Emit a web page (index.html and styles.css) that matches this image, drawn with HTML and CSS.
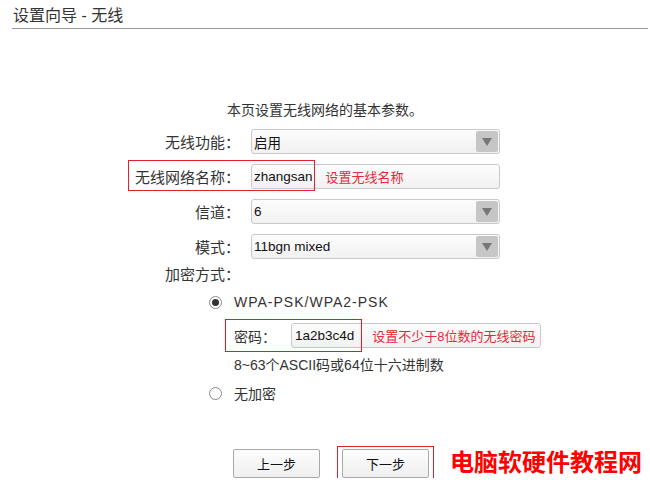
FILE: index.html
```html
<!DOCTYPE html>
<html lang="zh-CN">
<head>
    <meta charset="UTF-8">
    <title>设置向导 - 无线</title>
    <link rel="stylesheet" href="styles.css">
</head>
<body>
    <div class="title">设置向导 - 无线</div>
    <p class="intro">本页设置无线网络的基本参数。</p>

    <div class="form">
        <div class="row">
            <label>无线功能：</label>
            <div class="select"><span>启用</span><i class="arrow"></i></div>
        </div>
        <div class="row">
            <label>无线网络名称：</label>
            <div class="field"><span class="value">zhangsan</span><span class="note">设置无线名称</span></div>
            <span class="mark mark-name"></span>
        </div>
        <div class="row">
            <label>信道：</label>
            <div class="select"><span>6</span><i class="arrow"></i></div>
        </div>
        <div class="row">
            <label>模式：</label>
            <div class="select"><span>11bgn mixed</span><i class="arrow"></i></div>
        </div>
        <div class="row row-enc">
            <label>加密方式：</label>
        </div>

        <div class="option option-wpa">
            <span class="radio checked"></span>
            <span class="wpa">WPA-PSK/WPA2-PSK</span>
        </div>
        <div class="pwd">
            <span class="pwd-label">密码：</span>
            <div class="field"><span class="value">1a2b3c4d</span><span class="note note-pwd">设置不少于8位数的无线密码</span></div>
            <span class="mark mark-pwd"></span>
        </div>
        <div class="hint">8~63个ASCII码或64位十六进制数</div>
        <div class="option option-none">
            <span class="radio"></span>
            <span>无加密</span>
        </div>

        <div class="buttons">
            <button type="button">上一步</button>
            <div class="next">
                <button type="button">下一步</button>
                <span class="mark mark-next"></span>
            </div>
            <span class="watermark">电脑软硬件教程网</span>
        </div>
    </div>
</body>
</html>
```

FILE: styles.css
```css
body {
    margin: 0;
    width: 650px;
    font-family: "Liberation Sans", "Noto Sans CJK SC", sans-serif;
    font-size: 14px;
    color: #333;
    background: #fff;
}

.title {
    margin: 0 2px 0 12px;
    padding: 5px 0 1px 1px;
    line-height: 22px;
    font-size: 16px;
    color: #333;
    border-bottom: 1px solid #9a9a9a;
}

.intro {
    margin: 71px 0 9px 0;
    line-height: 20px;
    text-align: center;
}

.form {
    display: flex;
    flex-direction: column;
}

.row {
    position: relative;
    display: grid;
    grid-template-columns: 240px 249px;
    column-gap: 11px;
    align-items: center;
    height: 25px;
    margin-bottom: 10px;
}

.row label {
    text-align: right;
    font-size: 15px;
}

.row-enc {
    height: 20px;
    margin-top: -6px;
    margin-bottom: 9px;
}

.select,
.field {
    box-sizing: border-box;
    height: 25px;
    display: flex;
    align-items: center;
    border: 1px solid #c9c9c9;
    border-radius: 3px;
    background: linear-gradient(#fdfdfd, #f1f1f1);
    color: #111;
    padding-left: 2px;
    font-size: 13.5px;
}

.select span {
    flex: 1;
}

.arrow {
    width: 22px;
    height: 21px;
    margin-right: 1px;
    background: #c6c6c6;
    border-radius: 2px;
    position: relative;
}

.arrow::after {
    content: "";
    position: absolute;
    left: 6px;
    top: 7px;
    border-left: 5px solid transparent;
    border-right: 5px solid transparent;
    border-top: 8px solid #777;
}

.value {
    color: #111;
}

.note {
    color: #e8283a;
    font-size: 13px;
    margin-left: 13px;
}

.note-pwd {
    margin-left: 18px;
}

.mark {
    position: absolute;
    box-sizing: border-box;
    border: 1px solid #e3202c;
    pointer-events: none;
}

.mark-name {
    left: 128px;
    top: -4px;
    width: 187px;
    height: 31px;
}

.option {
    display: flex;
    align-items: center;
    height: 20px;
    padding-left: 209px;
}

.wpa {
    letter-spacing: 1px;
}

.radio {
    box-sizing: border-box;
    width: 13px;
    height: 13px;
    margin-right: 12px;
    border: 1px solid #8a8a8a;
    border-radius: 50%;
    background: #fff;
    position: relative;
}

.radio.checked::after {
    content: "";
    position: absolute;
    left: 2px;
    top: 2px;
    width: 7px;
    height: 7px;
    border-radius: 50%;
    background: #333;
}

.pwd {
    position: relative;
    display: flex;
    align-items: center;
    height: 25px;
    margin-top: 11px;
    padding-left: 234px;
}

.pwd-label {
    flex: none;
    width: 57px;
}

.pwd .field {
    width: 250px;
    padding-left: 3px;
}

.mark-pwd {
    left: 225px;
    top: -4px;
    width: 137px;
    height: 33px;
    border-color: #ff1020;
}

.hint {
    margin-top: 7px;
    line-height: 20px;
    padding-left: 234px;
}

.option-none {
    margin-top: 8px;
}

.buttons {
    display: flex;
    align-items: center;
    margin-top: 45px;
    padding-left: 233px;
}

button {
    width: 87px;
    height: 29px;
    border: 1px solid #a9a9a9;
    border-radius: 2px;
    background: linear-gradient(#fdfdfd, #efefef);
    font-family: "Liberation Sans", "Noto Sans CJK SC", sans-serif;
    font-size: 13px;
    color: #111;
    padding: 0;
}

.next {
    position: relative;
    margin-left: 22px;
}

.next button {
    display: block;
}

.mark-next {
    left: -5px;
    top: -3px;
    width: 97px;
    height: 36px;
}

.watermark {
    margin-left: 21px;
    font-size: 24px;
    font-weight: bold;
    color: #ff0000;
    line-height: 30px;
}
```
